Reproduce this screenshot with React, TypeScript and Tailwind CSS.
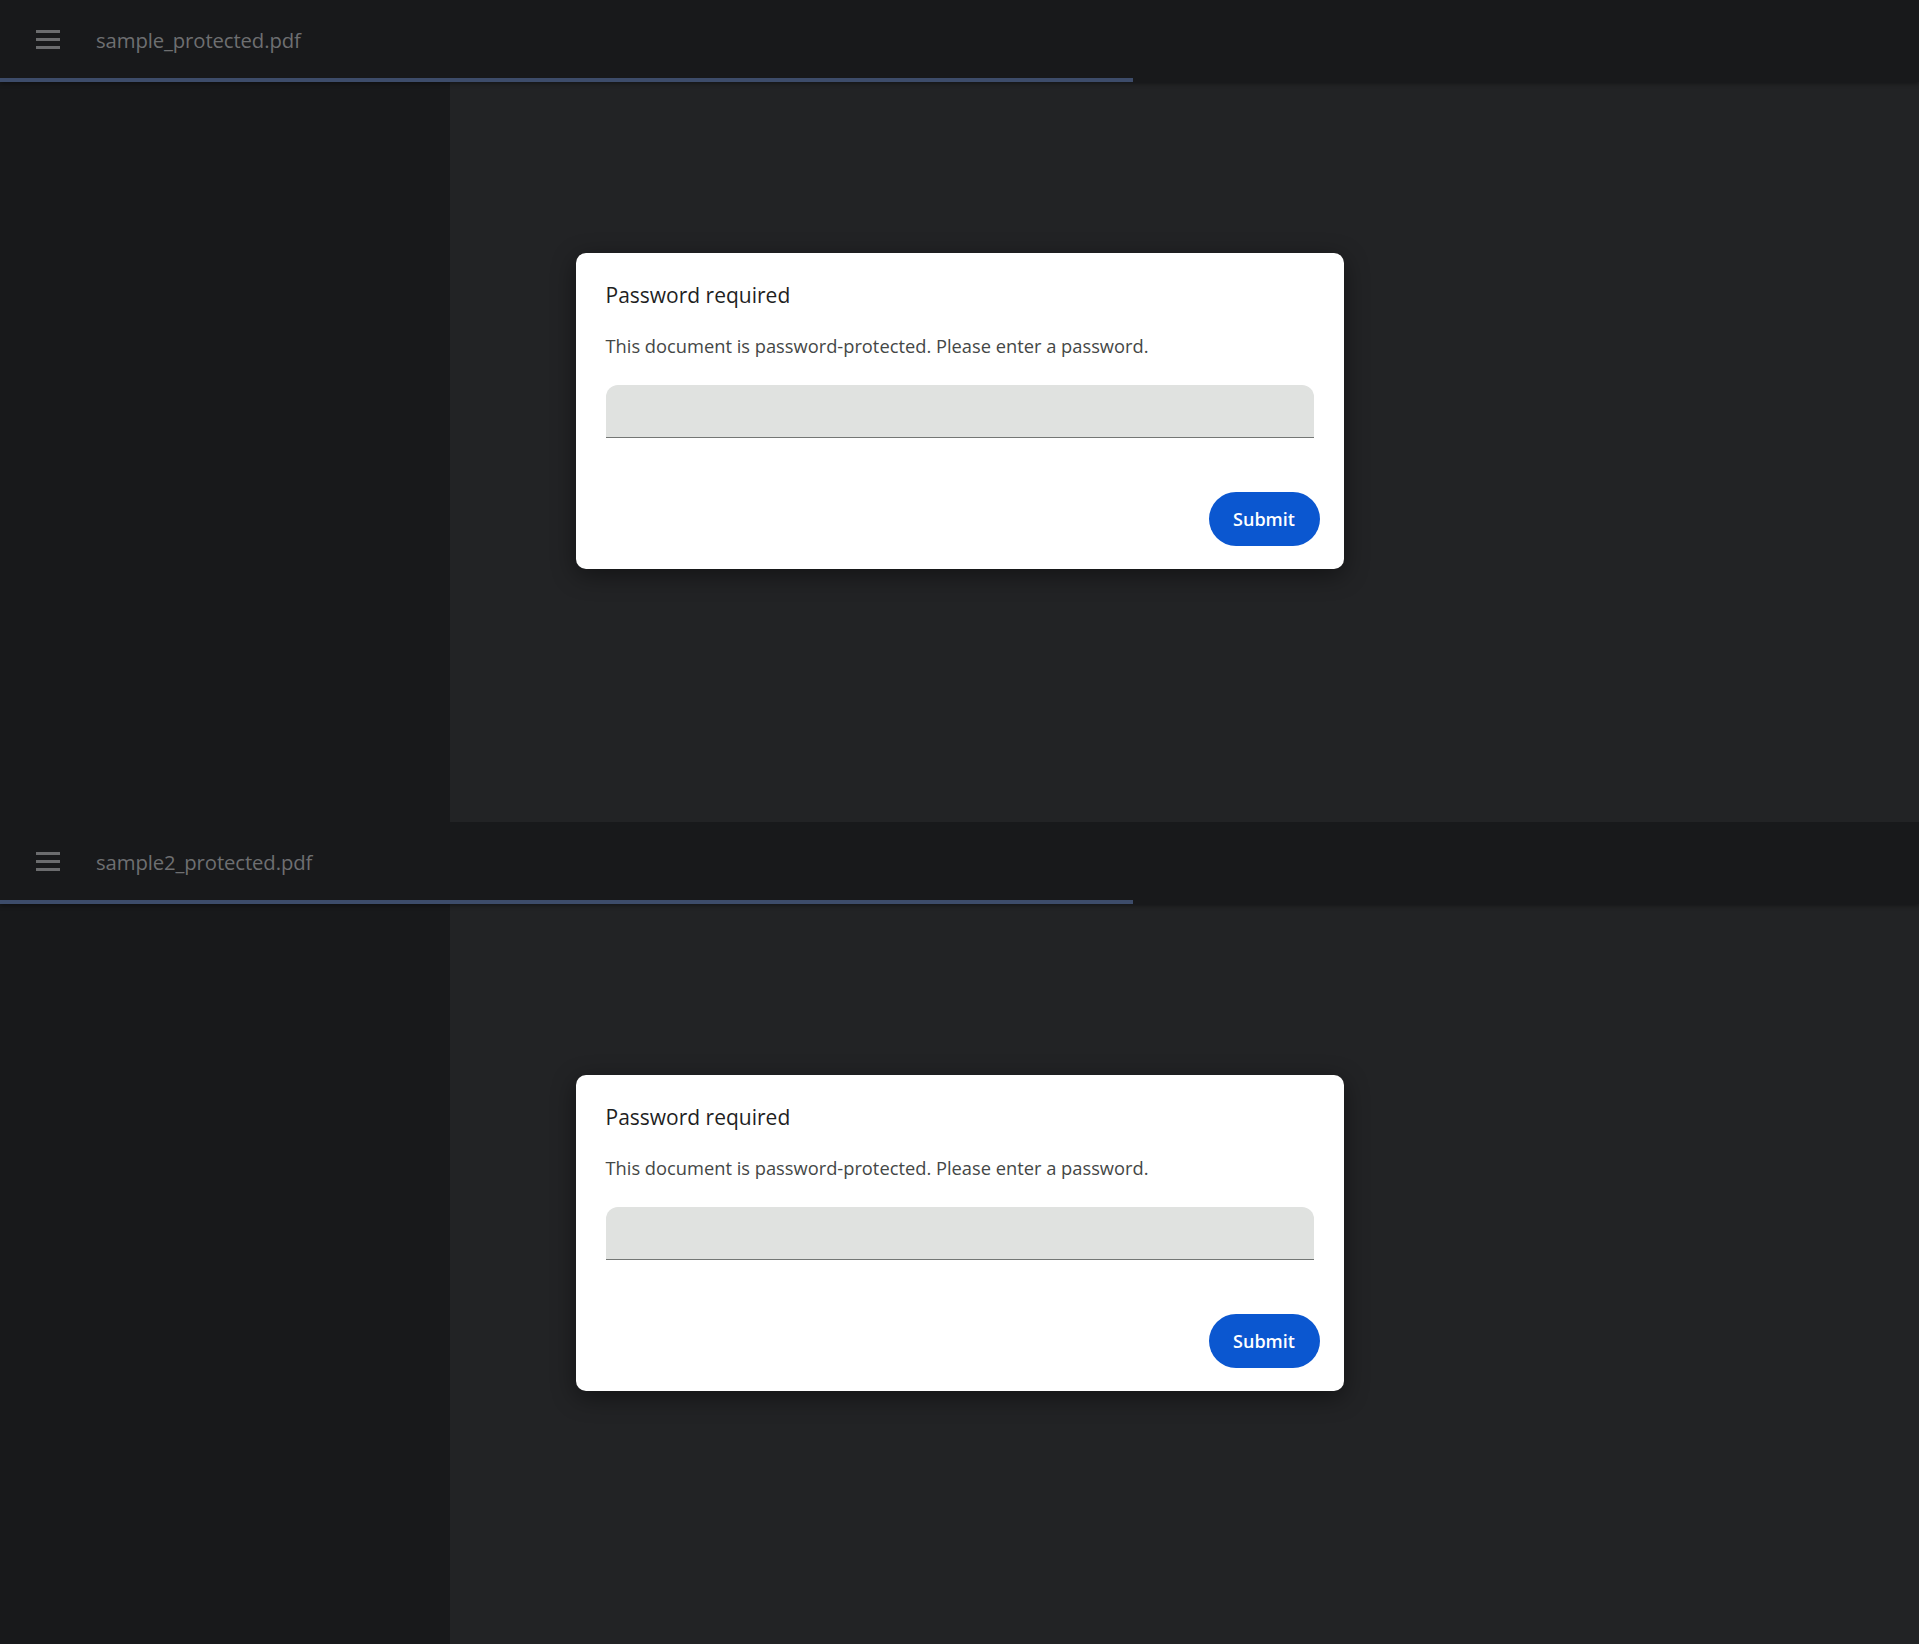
import React from "react";

function Panel({ name }: { name: string }) {
  return (
    <div className="relative h-[822px] flex flex-col overflow-hidden">
      <div className="relative z-10 h-[82px] shrink-0 flex flex-col bg-[#18191b] shadow-[0_2px_4px_rgba(0,0,0,0.35)]">
        <div className="h-[78px] flex items-center">
          <div className="ml-[36px] w-[24px] flex flex-col gap-[5px]">
            <div className="h-[3px] bg-[#6b6c6e]" />
            <div className="h-[3px] bg-[#6b6c6e]" />
            <div className="h-[3px] bg-[#6b6c6e]" />
          </div>
          <div className="ml-[36px] pt-[3px] text-[20.3px] text-[#6e6f71] font-['Open_Sans',sans-serif] tracking-[-0.1px]">
            {name}
          </div>
        </div>
        <div className="h-[4px] w-[1133px] bg-[#3d4c6a]" />
      </div>
      <div className="flex-1 flex">
        <div className="w-[450px] bg-[#18191b]" />
        <div className="flex-1 bg-[#222325]" />
      </div>
      <div className="absolute inset-0 z-20 flex items-center justify-center">
        <div className="w-[768px] h-[316px] bg-white rounded-[10px] shadow-[0_6px_24px_rgba(0,0,0,0.45)] px-[30px] pt-[28px] flex flex-col font-['Open_Sans',sans-serif]">
          <div className="text-[21px] leading-[28px] text-[#1f1f1f]">Password required</div>
          <div className="mt-[24px] text-[18.3px] leading-[26px] text-[#444746]">
            This document is password-protected. Please enter a password.
          </div>
          <div className="mt-[26px] h-[53px] bg-[#e0e2e0] rounded-t-[12px] border-b border-[#747775]" />
          <div className="flex justify-end mr-[-6px] mt-[54px]">
            <button className="w-[111px] h-[54px] rounded-full bg-[#0b57d0] text-white text-[18px] font-semibold">
              Submit
            </button>
          </div>
        </div>
      </div>
    </div>
  );
}

export default function App() {
  return (
    <div className="w-[1919px] h-[1644px] overflow-hidden bg-[#222325]">
      <Panel name="sample_protected.pdf" />
      <Panel name="sample2_protected.pdf" />
    </div>
  );
}
